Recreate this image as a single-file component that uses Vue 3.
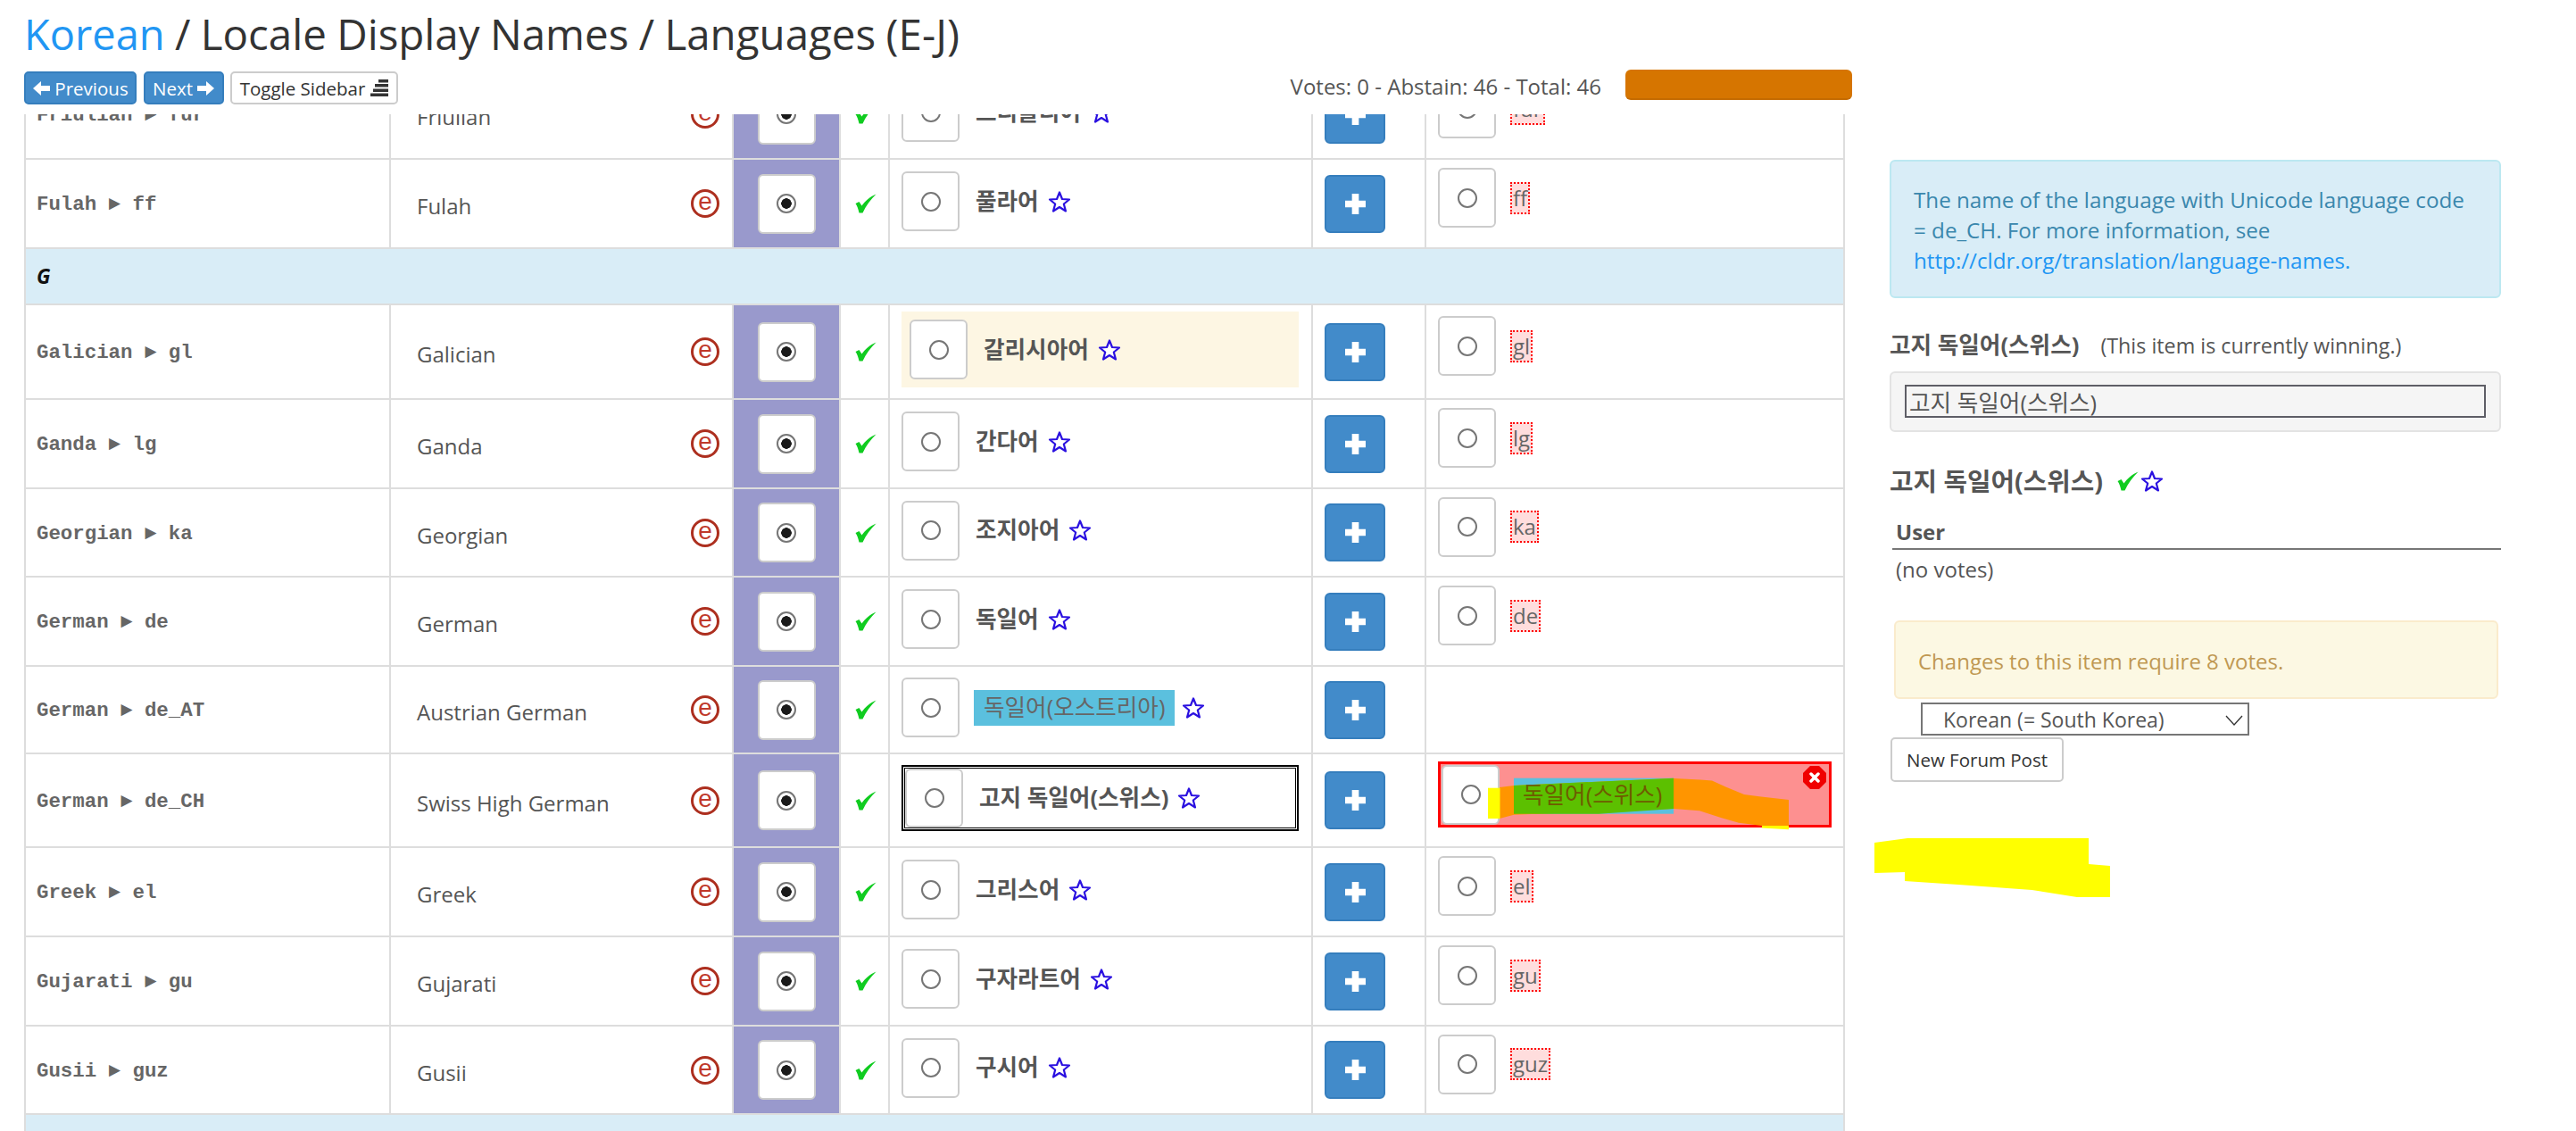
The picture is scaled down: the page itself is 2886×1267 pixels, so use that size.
<script setup>
const rows = [
  { type: 'row', h: 100, name: 'Friulian', code: 'fur', en: 'Friulian', ko: '프리울리어', chip: 'fur' },
  { type: 'row', h: 100, name: 'Fulah', code: 'ff', en: 'Fulah', ko: '풀라어', chip: 'ff' },
  { type: 'band', h: 63, label: 'G' },
  { type: 'row', h: 106, name: 'Galician', code: 'gl', en: 'Galician', ko: '갈리시아어', chip: 'gl', mode: 'soft' },
  { type: 'row', h: 100, name: 'Ganda', code: 'lg', en: 'Ganda', ko: '간다어', chip: 'lg' },
  { type: 'row', h: 99, name: 'Georgian', code: 'ka', en: 'Georgian', ko: '조지아어', chip: 'ka' },
  { type: 'row', h: 100, name: 'German', code: 'de', en: 'German', ko: '독일어', chip: 'de' },
  { type: 'row', h: 98, name: 'German', code: 'de_AT', en: 'Austrian German', ko: '독일어(오스트리아)', mode: 'candidate' },
  { type: 'row', h: 105, name: 'German', code: 'de_CH', en: 'Swiss High German', ko: '고지 독일어(스위스)', mode: 'selected', error: '독일어(스위스)' },
  { type: 'row', h: 100, name: 'Greek', code: 'el', en: 'Greek', ko: '그리스어', chip: 'el' },
  { type: 'row', h: 100, name: 'Gujarati', code: 'gu', en: 'Gujarati', ko: '구자라트어', chip: 'gu' },
  { type: 'row', h: 99, name: 'Gusii', code: 'guz', en: 'Gusii', ko: '구시어', chip: 'guz' },
  { type: 'band', h: 63, label: 'H' },
]
</script>

<template>
  <svg class="sprite" width="0" height="0" aria-hidden="true">
    <symbol id="star" viewBox="0 0 26 26">
      <path d="M13 2.500 L16 10 L24 10.500 L17.800 15.500 L20 23.500 L13 19 L6 23.500 L8.200 15.500 L2 10.500 L10 10 Z" fill="#fff" stroke="#2a10e0" stroke-width="2.200" stroke-linejoin="round" />
    </symbol>
    <symbol id="check" viewBox="0 0 24 22">
      <path d="M0.500 11 L4.500 9 L7.500 13.500 C11 8.500 16.500 3.500 23.500 0.500 C17.500 6.500 12 13.500 8.500 21.500 L4.500 21.500 C3.500 17 2.500 14 0.500 11 Z" fill="#10cc20" />
    </symbol>
  </svg>

  <div class="page">
    <div class="main">
      <header class="head">
        <h1 class="title"><a class="link">Korean</a> / Locale Display Names / Languages (E-J)</h1>
        <div class="toolbar">
          <button class="btn primary">
            <svg class="arrow" viewBox="0 0 20 20"><path d="M10 2 L1 10 L10 18 V13 H20 V7 H10 Z" fill="#fff" /></svg>
            Previous
          </button>
          <button class="btn primary">
            Next
            <svg class="arrow" viewBox="0 0 20 20"><path d="M10 2 L19 10 L10 18 V13 H0 V7 H10 Z" fill="#fff" /></svg>
          </button>
          <button class="btn plain">
            Toggle Sidebar
            <svg class="bars" viewBox="0 0 20 19"><path d="M9 0h11v3.500H9zM5 5h15v3.500H5zM3 10.500h17V14H3zM0 15.500h20V19H0z" fill="#333" /></svg>
          </button>
          <span class="votes">Votes: 0 - Abstain: 46 - Total: 46</span>
          <span class="progress"></span>
        </div>
      </header>

      <div class="table-clip">
        <table class="grid">
          <colgroup>
            <col class="c1" /><col class="c2" /><col class="c3" /><col class="c4" /><col class="c5" /><col class="c6" /><col class="c7" />
          </colgroup>
          <tbody>
            <template v-for="(r, i) in rows" :key="i">
              <tr v-if="r.type === 'band'" class="band" :style="{ height: r.h + 'px' }">
                <td colspan="7">{{ r.label }}</td>
              </tr>
              <tr v-else :style="{ height: r.h + 'px' }">
                <td class="code">{{ r.name }} ► {{ r.code }}</td>
                <td class="english">
                  <div class="english-in">
                    <span class="en-text">{{ r.en }}</span>
                    <span class="e-icon"><span>e</span></span>
                  </div>
                </td>
                <td class="abstain">
                  <label class="radio-box"><input class="radio" type="radio" checked /></label>
                </td>
                <td class="status">
                  <svg class="check"><use href="#check" /></svg>
                </td>
                <td class="winning">
                  <div class="value" :class="r.mode">
                    <label class="radio-box"><input class="radio" type="radio" /></label>
                    <span class="ko">{{ r.ko }}</span>
                    <svg class="star"><use href="#star" /></svg>
                  </div>
                </td>
                <td class="add">
                  <button class="plus" aria-label="add">
                    <svg viewBox="0 0 24 24" width="23" height="23"><path d="M8 0h8v8h8v8h-8v8H8v-8H0V8h8z" fill="#fff" /></svg>
                  </button>
                </td>
                <td class="others">
                  <div v-if="r.chip" class="other">
                    <label class="radio-box"><input class="radio" type="radio" /></label>
                    <span class="chip">{{ r.chip }}</span>
                  </div>
                  <div v-if="r.error" class="error-box">
                    <label class="radio-box"><input class="radio" type="radio" /></label>
                    <svg class="strokes" viewBox="1613 856 440 80" width="440" height="80">
                      <rect x="1695" y="871.700" width="179" height="40" fill="#5bc0de" />
                      <polygon points="1679,882 1695,880 1874,872 1904,873.500 1917,874.500 1933,881.700 1953,890 1970,892.300 2003,896 2003,925 1973,925 1947,921.700 1927,916 1903,908.300 1874,906 1695,912.700 1679,917" fill="#ff9500" />
                      <polygon points="1973,925 2003,925 2003,929.300 1973,927.500" fill="#ffff00" />
                      <rect x="1666" y="882.700" width="13.500" height="34.300" fill="#ffff00" />
                      <polygon points="1695,880 1874,871.700 1874,906 1790,911.700 1695,911.700" fill="#5cc000" />
                    </svg>
                    <span class="error-text">{{ r.error }}</span>
                    <svg class="close" viewBox="0 0 26 26">
                      <polygon points="8,0 18,0 26,8 26,18 18,26 8,26 0,18 0,8" fill="#f00000" />
                      <path d="M9 9 L17 17 M17 9 L9 17" stroke="#fff" stroke-width="3.500" stroke-linecap="round" />
                    </svg>
                  </div>
                </td>
              </tr>
            </template>
          </tbody>
        </table>
      </div>
    </div>

    <aside class="side">
      <div class="notice">
        The name of the language with Unicode language code = de_CH. For more information, see
        <a class="link">http://cldr.org/translation/language-names.</a>
      </div>

      <div class="winning-line">
        <b class="win-name">고지 독일어(스위스)</b>
        <span class="win-note">(This item is currently winning.)</span>
      </div>
      <div class="well">
        <input class="well-input" type="text" value="고지 독일어(스위스)" />
      </div>

      <h2 class="item-head">
        고지 독일어(스위스)
        <svg class="check side-check"><use href="#check" /></svg><svg class="star side-star"><use href="#star" /></svg>
      </h2>

      <div class="user-head">User</div>
      <div class="no-votes">(no votes)</div>

      <div class="warn">Changes to this item require 8 votes.</div>
      <select class="org">
        <option>Korean (= South Korea)</option>
      </select>
      <button class="btn plain forum">New Forum Post</button>
    </aside>

    <svg class="blob" viewBox="2100 939 264 66" width="264" height="66">
      <polygon points="2100,944 2137,939 2340,939 2340,968 2364,970 2364,1005 2327,1005 2276.500,997 2194,991 2134,987 2134,977 2100,978" fill="#ffff00" />
    </svg>
  </div>
</template>

<style>
html, body { margin: 0; background: #fff; overflow: hidden; }
</style>

<style scoped>
.sprite { position: absolute; }
.page {
  position: relative;
  display: flex;
  height: 1267px;
  width: 2886px;
  overflow: hidden;
  padding-left: 27px;
  box-sizing: border-box;
  font-family: "Open Sans", "Noto Sans CJK KR", sans-serif;
  font-size: 24px;
  line-height: 34px;
  color: #555;
}
.main { width: 2048px; flex: none; display: flex; flex-direction: column; }
.head { height: 128px; flex: none; }
.title {
  margin: 0;
  height: 78px;
  padding-top: 10px;
  box-sizing: border-box;
  font-size: 47.500px;
  line-height: 56px;
  font-weight: 400;
  color: #333;
  word-spacing: -1px;
  white-space: nowrap;
}
.title .link { font-size: 47px; }
.link { color: #2196f3; }
.toolbar { display: flex; align-items: flex-start; }
.btn {
  font-family: "Open Sans", sans-serif;
  font-size: 20.500px;
  line-height: 26px;
  border-radius: 5px;
  box-sizing: border-box;
  padding: 0;
  display: inline-flex;
  align-items: center;
  justify-content: center;
}
.toolbar .btn { height: 37px; margin-top: 2px; }
.primary {
  background: #428bca;
  border: 2px solid #357ebd;
  color: #fff;
  margin-right: 8px;
  gap: 5px;
}
.primary:nth-child(1) { width: 126px; }
.primary:nth-child(2) { width: 90px; margin-right: 7px; }
.plain {
  background: #fff;
  border: 2px solid #ccc;
  color: #333;
}
.toolbar .plain { width: 188px; gap: 6px; }
.arrow { width: 20px; height: 20px; }
.bars { width: 20px; height: 19px; }
.votes { margin-left: auto; margin-top: 2px; line-height: 34px; }
.progress {
  width: 254px;
  height: 34px;
  margin-left: 27px;
  background: #d67500;
  border-bottom: 2px solid #c46b00;
  box-sizing: border-box;
  border-radius: 6px;
}
.table-clip { flex: 1; overflow: hidden; min-height: 0; }
.grid {
  margin-top: -49px;
  width: 2040px;
  table-layout: fixed;
  border-collapse: separate;
  border-spacing: 0;
  border-left: 2px solid #ddd;
}
.c1 { width: 409px; }
.c2 { width: 384px; }
.c3 { width: 120px; }
.c4 { width: 55px; }
.c5 { width: 474px; }
.c6 { width: 127px; }
.c7 { width: 469px; }
td {
  padding: 0;
  border-right: 2px solid #ddd;
  border-bottom: 2px solid #ddd;
  vertical-align: middle;
}
.band td {
  background: #d9edf7;
  padding-left: 12px;
  font-weight: 700;
  font-style: italic;
  color: #111;
  font-size: 22.400px;
}
.code {
  padding: 2px 0 0 12px;
  font-family: "Liberation Mono", monospace;
  font-weight: 700;
  font-size: 22.400px;
  color: #666;
  white-space: nowrap;
}
.english { padding: 0 14px 0 29px; }
.english-in { display: flex; align-items: center; justify-content: space-between; }
.en-text { padding-top: 6px; }
.e-icon {
  width: 32px;
  height: 32px;
  box-sizing: border-box;
  border: 3px solid #ad2f1f;
  border-radius: 50%;
  display: flex;
  align-items: center;
  justify-content: center;
  flex: none;
  color: #c0392b;
  font-family: "Liberation Sans", sans-serif;
  font-size: 28px;
  line-height: 26px;
}
.e-icon span { margin-top: -4px; }
.abstain { background: #9999cc; text-align: center; }
.radio-box {
  width: 65px;
  height: 67px;
  box-sizing: border-box;
  background: #fff;
  border: 2px solid #ccc;
  border-radius: 6px;
  display: inline-flex;
  align-items: center;
  justify-content: center;
  flex: none;
}
.radio {
  appearance: none;
  margin: 0;
  width: 22px;
  height: 22px;
  border: 2px solid #767676;
  border-radius: 50%;
  box-sizing: border-box;
  background: #fff;
}
.radio:checked { background: radial-gradient(circle, #1a1a1a 0 5.500px, #fff 6px); }
.status { padding-left: 16px; }
.check { width: 24px; height: 22px; display: block; }
.winning { padding: 0 6px 5px 13px; }
.value { display: flex; align-items: center; font-weight: 700; }
.ko { font-size: 25.600px; margin-left: 18px; color: #555; white-space: nowrap; }
.star { width: 26px; height: 26px; margin-left: 10px; flex: none; }
.value.soft { background: #fdf6e3; height: 85px; width: 445px; padding-left: 9px; box-sizing: border-box; }
.value.candidate .ko { background: #5bc0de; font-weight: 400; line-height: 40px; padding: 0 11px; margin-left: 16px; color: #666; }
.value.candidate .star { margin-left: 8px; }
.value.selected {
  border: 2px solid #000;
  box-shadow: inset 0 0 0 1px #fff, inset 0 0 0 2px #000;
  padding: 0 2px;
  height: 74px;
  width: 445px;
  box-sizing: border-box;
}
.value.selected .radio-box { height: 66px; }
.value.selected .ko { margin-left: 18px; }
.add { padding-left: 13px; }
.plus {
  width: 68px;
  height: 65px;
  padding: 0;
  background: #428bca;
  border: 2px solid #357ebd;
  border-radius: 6px;
  display: inline-flex;
  align-items: center;
  justify-content: center;
  vertical-align: middle;
}
.others { padding: 0 14px 0 13px; }
.other { display: flex; align-items: center; margin-bottom: 13px; }
.chip {
  margin-left: 16px;
  height: 36px;
  line-height: 32px;
  box-sizing: border-box;
  padding: 0 1px;
  background: #fdd;
  border: 2px dotted #f00;
  color: #666;
}
.error-box {
  position: relative;
  width: 441px;
  height: 74px;
  box-sizing: border-box;
  background: #fd9090;
  border: 3px solid #f00;
  display: flex;
  align-items: center;
  padding-left: 1px;
  margin-bottom: 13px;
}
.strokes { position: absolute; left: 0; top: 0; overflow: visible; }
.error-text {
  position: relative;
  margin-left: 26px;
  margin-top: 2px;
  font-size: 25.600px;
  color: #6e5c00;
}
.close { position: absolute; top: 2px; right: 3px; width: 26px; height: 26px; }
.side { width: 685px; flex: none; margin-left: 42px; padding-top: 179px; }
.notice {
  height: 155px;
  box-sizing: border-box;
  background: #d9edf7;
  border: 2px solid #bce8f1;
  border-radius: 6px;
  padding: 26px 24px 0 25px;
  color: #3a87ad;
  font-size: 24.200px;
}
.winning-line { margin-top: 36px; height: 46px; display: flex; align-items: flex-start; line-height: 34px; }
.win-name { font-size: 25.600px; font-weight: 700; }
.win-note { margin-left: 24px; font-size: 23.300px; }
.well {
  height: 68px;
  box-sizing: border-box;
  background: #f5f5f5;
  border: 2px solid #e3e3e3;
  border-radius: 6px;
  padding: 13px 15px 0;
}
.well-input {
  display: block;
  width: 100%;
  height: 37px;
  box-sizing: border-box;
  background: transparent;
  border: 2px solid #5e5e66;
  padding: 0 3px;
  margin: 0;
  font-family: inherit;
  font-size: 25.600px;
  color: #555;
}
.item-head {
  margin: 35px 0 0;
  height: 40px;
  line-height: 40px;
  font-size: 28.800px;
  font-weight: 700;
  display: flex;
  align-items: center;
  color: #555;
}
.side-check { margin-left: 16px; }
.side-star { margin-left: 2px; }
.user-head {
  margin-top: 20px;
  margin-left: 3px;
  height: 37px;
  line-height: 34px;
  font-weight: 700;
  border-bottom: 2px solid #777;
  box-sizing: border-box;
  padding-left: 4px;
}
.no-votes { padding-left: 7px; height: 34px; line-height: 44px; }
.warn {
  margin: 45px 3px 0 5px;
  height: 88px;
  box-sizing: border-box;
  background: #fcf8e3;
  border: 2px solid #faebcc;
  border-radius: 6px;
  padding: 27px 25px 0;
  color: #c09853;
}
.org {
  display: block;
  margin: 4px 0 0 35px;
  width: 368px;
  height: 37px;
  box-sizing: border-box;
  font-family: inherit;
  font-size: 23px;
  color: #555;
  appearance: none;
  background: #fff url("data:image/svg+xml,%3Csvg xmlns='http://www.w3.org/2000/svg' width='20' height='12'%3E%3Cpath d='M1 1 L10 11 L19 1' fill='none' stroke='%23333' stroke-width='1.300'/%3E%3C/svg%3E") no-repeat right 5px top 12px;
  border: 2px solid #767676;
  border-radius: 0;
  padding-left: 23px;
}
.forum { width: 194px; height: 50px; margin: 2px 0 0 1px; }
.blob { position: absolute; left: 2100px; top: 939px; }
</style>
